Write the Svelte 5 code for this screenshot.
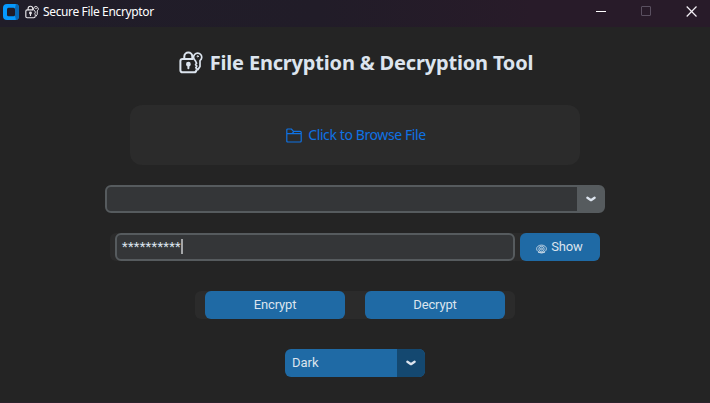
<script>
  let password = $state('**********');
  let mode = $state('Dark');
</script>

{#snippet lock()}
  <svg class="lock" viewBox="0 0 24 23" fill="none" stroke="currentColor" stroke-width="2" stroke-linejoin="round" stroke-linecap="round">
    <path d="M17.3 19.2Q17.3 21.3 15.2 21.3H3.6Q1.4 21.3 1.4 19.2V10Q1.4 7.9 3.6 7.9H13.5" />
    <path d="M5.3 7.6V5.6a4 4 0 0 1 8 0V7.4" />
    <path d="M16.3 9.6a4.1 4.1 0 1 1 4.7 0V15.6l-2.2 3.2-2-2.2 1-1.5-1.2-1.5 1-1.3z" stroke-width="1.7" />
    <circle cx="18.7" cy="5.3" r=".6" stroke-width="1" />
    <circle cx="9.4" cy="13.2" r="1.4" fill="currentColor" />
    <path d="M9.4 14v3.3" />
  </svg>
{/snippet}

{#snippet chevron()}
  <svg class="chevron" viewBox="0 0 10 6" fill="none" stroke="#dce4ee" stroke-width="2.3" stroke-linecap="round" stroke-linejoin="round">
    <path d="M1.4 1.7 5 4.2 8.6 1.7" />
  </svg>
{/snippet}

<div class="window">
  <header>
    <svg class="logo" viewBox="0 0 16 16">
      <rect width="16" height="16" rx="4" fill="#0599ff" />
      <path d="M13 0Q16 0 16 4V12Q16 16 13 16L12 12V4Z" fill="#0868b5" />
      <rect x="4" y="3.7" width="8" height="8.6" rx="1.5" fill="#211c28" />
    </svg>
    <span class="small-lock">{@render lock()}</span>
    <span class="caption">Secure File Encryptor</span>
    <div class="controls">
      <svg viewBox="0 0 11 11"><path d="M0 5.5H10" stroke="#fff" /></svg>
      <svg viewBox="0 0 11 11"><rect x=".5" y=".5" width="9" height="9" rx=".5" fill="none" stroke="#5a5060" /></svg>
      <svg viewBox="0 0 11 11"><path d="M.7.5 10.5 10.5M10.5 .5.7 10.5" stroke="#f4f0f6" stroke-width="1.2" /></svg>
    </div>
  </header>
  <main>
    <h1>{@render lock()}<span>File Encryption &amp; Decryption Tool</span></h1>
    <div class="drop">
      <svg viewBox="0 0 16 15" fill="none" stroke="#0f72e4" stroke-width="1.2" stroke-linejoin="round">
        <path d="M.8 13.2V2Q.8 1 1.8 1H5.3L7.5 3.3H14.2Q15.2 3.3 15.2 4.3V13Q15.2 14 14.2 14H1.8Q.8 14 .8 13ZM.8 5.6H15M6 5.6 7.8 3.6" />
      </svg>
      <span>Click to Browse File</span>
    </div>
    <div class="combo"><div class="value"></div><div class="toggle">{@render chevron()}</div></div>
    <div class="password">
      <div class="entry"><span>{password}</span><i></i></div>
      <button class="show">
        <svg viewBox="0 0 11 10" fill="none" stroke="#dce4ee" stroke-width=".8">
          <ellipse cx="5.5" cy="4.8" rx="4.9" ry="3.7" />
          <circle cx="5.5" cy="5" r="2.7" />
          <circle cx="5.5" cy="5" r="1" />
          <path d="M2 8.2Q5.5 10 9 8.2" />
        </svg>
        <span>Show</span>
      </button>
    </div>
    <div class="actions"><button>Encrypt</button><button>Decrypt</button></div>
    <div class="mode"><span>{mode}</span><div class="toggle">{@render chevron()}</div></div>
  </main>
</div>

<style>
  :global(body) { margin: 0; background: #242424; }
  .window { width: 710px; height: 403px; box-sizing: border-box; border-bottom: 1px solid #2a222b; background: #242424; color: #dce4ee; display: flex; flex-direction: column; overflow: hidden; font: 13px Roboto, sans-serif; }
  svg { display: block; flex: none; }
  header { height: 27px; flex: none; display: flex; align-items: center; background: linear-gradient(90deg, #201d29, #211c28 45%, #281b29 75%, #281b29); color: #fff; box-sizing: border-box; padding: 0 13px 4px 3px; }
  .logo { width: 16px; height: 16px; }
  .small-lock { margin-left: 6px; color: #e8e6ea; }
  .small-lock :global(svg) { width: 14px; height: 14px; }
  .caption { margin-left: 4px; font: 12px/16px "Noto Sans", sans-serif; letter-spacing: -.36px; }
  .controls { margin-left: auto; display: flex; gap: 34px; }
  .controls svg { width: 11px; height: 11px; }
  main { display: flex; flex-direction: column; align-items: center; }
  h1 { margin: 20px 0 0; padding-left: 2px; height: 32px; display: flex; align-items: center; gap: 7px; font: 700 20px/32px "Noto Sans", sans-serif; letter-spacing: -.18px; white-space: nowrap; }
  h1 :global(svg) { width: 24px; height: 23px; margin-top: -2px; }
  .drop { width: 450px; height: 60px; margin-top: 26px; border-radius: 12px; background: #2b2b2b; box-sizing: border-box; padding-left: 2px; display: flex; align-items: center; justify-content: center; gap: 6px; color: #0f72e4; font: 14px/20px "Noto Sans", sans-serif; letter-spacing: -.4px; }
  .drop svg { width: 16px; height: 15px; }
  .combo { width: 500px; height: 28px; margin-top: 20px; display: flex; box-sizing: border-box; border: 2px solid #565b5e; border-radius: 6px; background: #343638; }
  .combo .value { flex: 1; }
  .toggle { display: flex; align-items: center; justify-content: center; }
  .combo .toggle { width: 26px; background: #565b5e; padding-left: 2px; box-sizing: border-box; }
  .chevron { width: 10px; height: 6px; }
  .password { width: 490px; height: 28px; margin-top: 20px; display: flex; box-sizing: border-box; padding-left: 5px; gap: 5px; border-radius: 6px; background: #2b2b2b; }
  .entry { width: 400px; height: 28px; box-sizing: border-box; border: 2px solid #565b5e; border-radius: 6px; background: #343638; display: flex; padding: 4px 5px; }
  .entry span { letter-spacing: .3px; line-height: 15px; }
  .entry i { width: 2px; height: 15px; background: #a4a6a8; }
  button { border: 0; padding: 0 0 1px; border-radius: 6px; background: #1f6aa5; color: #dce4ee; font: 13px/18px Roboto, sans-serif; letter-spacing: -.15px; height: 28px; }
  .show { width: 80px; display: flex; align-items: center; justify-content: center; gap: 4px; padding-right: 1px; }
  .show svg { width: 11px; height: 10px; margin-top: 4px; }
  .actions { width: 320px; height: 28px; margin-top: 30px; display: flex; justify-content: center; gap: 20px; border-radius: 6px; background: #2b2b2b; }
  .actions button { width: 140px; }
  .mode { width: 140px; height: 28px; margin-top: 30px; display: flex; border-radius: 6px; background: #1f6aa5; overflow: hidden; }
  .mode span { flex: 1; padding-left: 7px; line-height: 27px; }
  .mode .toggle { width: 28px; background: #144870; }
</style>
